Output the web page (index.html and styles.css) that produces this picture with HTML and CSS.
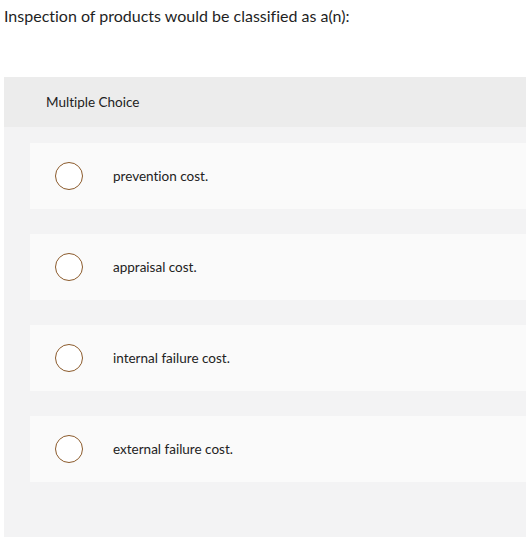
FILE: index.html
```html
<!DOCTYPE html>
<html>
<head>
<meta charset="utf-8">
<link rel="stylesheet" href="styles.css">
</head>
<body>
<p class="question">Inspection of products would be classified as a(n):</p>
<div class="panel">
  <div class="panel-head">Multiple Choice</div>
  <div class="panel-body">
    <div class="option"><span class="radio"></span><span class="label">prevention cost.</span></div>
    <div class="option"><span class="radio"></span><span class="label">appraisal cost.</span></div>
    <div class="option"><span class="radio"></span><span class="label">internal failure cost.</span></div>
    <div class="option"><span class="radio"></span><span class="label">external failure cost.</span></div>
  </div>
</div>
</body>
</html>
```
FILE: styles.css
```css
html, body {
  margin: 0;
  padding: 0;
  background: #ffffff;
}
body {
  font-family: Lato, "Open Sans", sans-serif;
  font-variant-ligatures: none;
  color: #222;
  padding-left: 4px;
}
.question {
  margin: 0;
  padding-top: 6px;
  height: 71px;
  font-size: 16px;
  line-height: 20px;
  color: #1f1f1f;
}
.panel {
  background: #f3f3f4;
  height: 460px;
}
.panel-head {
  background: #ececec;
  height: 50px;
  display: flex;
  align-items: center;
  padding-left: 42px;
  font-size: 13.5px;
}
.panel-body {
  padding: 16px 0 0 26px;
  display: flex;
  flex-direction: column;
  gap: 25px;
}
.option {
  background: #fafafa;
  height: 66px;
  display: flex;
  align-items: center;
  padding-left: 25px;
}
.radio {
  width: 26px;
  height: 26px;
  border: 1.4px solid #8b5a2b;
  border-radius: 50%;
  background: #fff;
  flex: none;
}
.label {
  margin-left: 30px;
  font-size: 13.5px;
  color: #222;
}
```
